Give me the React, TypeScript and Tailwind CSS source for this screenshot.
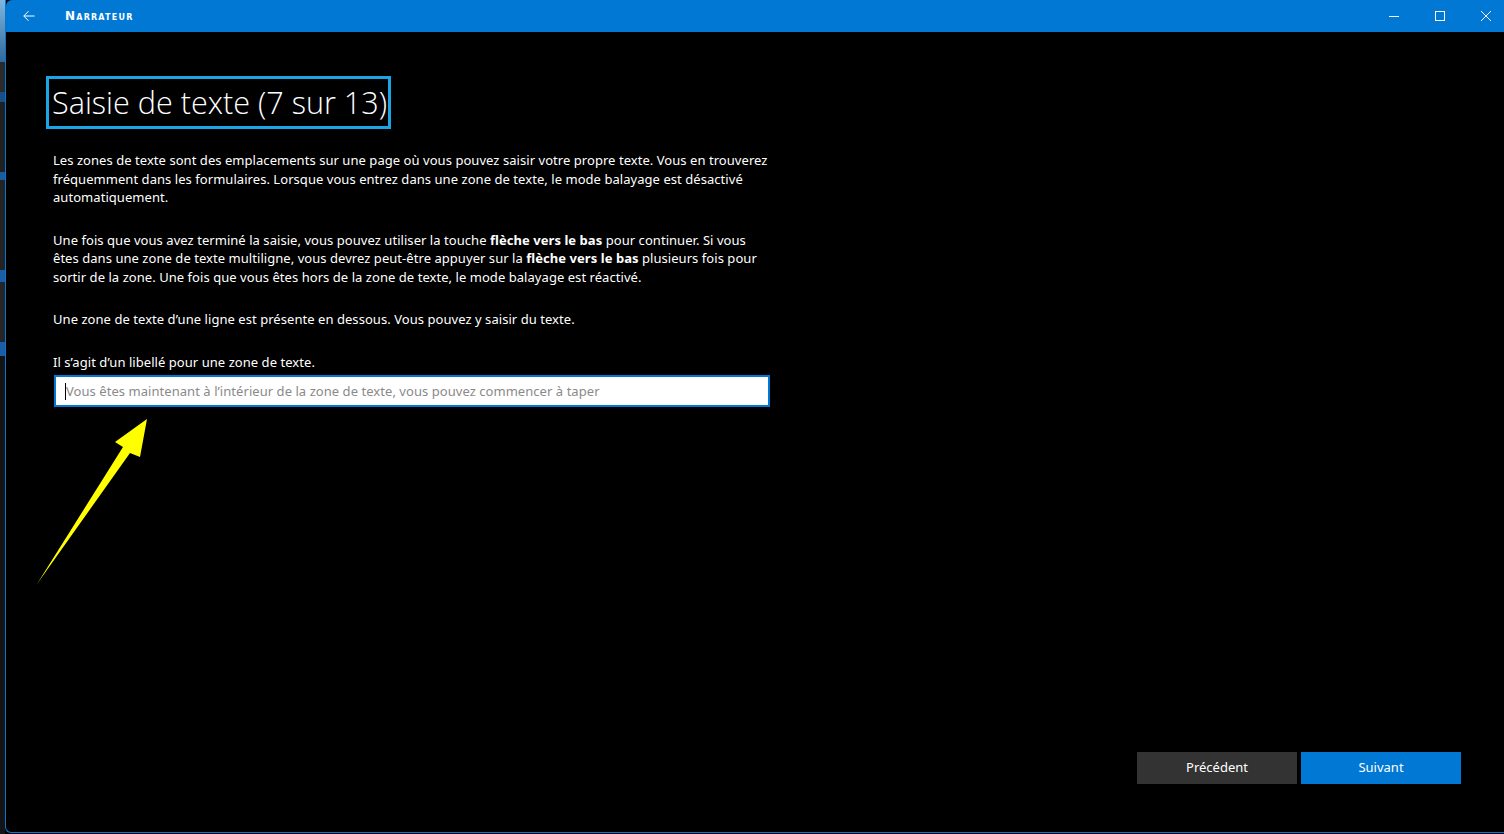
import React from 'react';

const body = { fontFamily: '"Noto Sans", "Open Sans", Arial, sans-serif' };

const App: React.FC = () => {
    return (
        <div className="relative flex w-[1504px] h-[834px] bg-black overflow-hidden" style={body}>
            {/* desktop strip peeking on the left */}
            <div className="w-[5px] h-full flex flex-col bg-[#1c1c1c]">
                <div className="h-[62px] bg-gradient-to-b from-[#7fb6e0] to-[#2f6a9a]" />
                <div className="h-[30px] bg-[#2a2a2a]" />
                <div className="h-[10px] bg-[#1a4f86]" />
                <div className="h-[70px] bg-[#202020]" />
                <div className="h-[8px] bg-[#1d5c9c]" />
                <div className="h-[90px] bg-[#232323]" />
                <div className="h-[12px] bg-[#1a5ea6]" />
                <div className="h-[60px] bg-[#262626]" />
                <div className="h-[14px] bg-[#1a5ea6]" />
                <div className="flex-1 bg-[#141414]" />
            </div>

            {/* window */}
            <div className="flex-1 flex flex-col border-l border-b border-[#0a74d0] rounded-bl-[6px] mb-[1px]">
                <div className="h-8 bg-[#0078d4] flex items-center text-white rounded-tl-[6px]">
                    <div className="w-[46px] flex items-center justify-center">
                        <svg width="12" height="12" viewBox="0 0 12 12" fill="none" stroke="white" strokeWidth="1">
                            <path d="M11.5 6H0.8M5.5 1.2L0.8 6l4.7 4.8" />
                        </svg>
                    </div>
                    <span
                        className="ml-[13px] text-[12px] font-bold tracking-[1.2px] [font-variant:small-caps]"
                        style={{ fontFamily: '"DejaVu Sans", sans-serif' }}
                    >
                        Narrateur
                    </span>
                    <div className="ml-auto mr-[-5px] flex h-full">
                        <div className="w-[46px] flex items-center justify-center">
                            <svg width="10" height="10" viewBox="0 0 10 10" stroke="white" strokeWidth="1">
                                <path d="M0 5.5h10" />
                            </svg>
                        </div>
                        <div className="w-[46px] flex items-center justify-center">
                            <svg width="10" height="10" viewBox="0 0 10 10" fill="none" stroke="white" strokeWidth="1">
                                <rect x="0.5" y="0.5" width="9" height="9" />
                            </svg>
                        </div>
                        <div className="w-[46px] flex items-center justify-center">
                            <svg width="10" height="10" viewBox="0 0 10 10" stroke="white" strokeWidth="1">
                                <path d="M0 0l10 10M10 0L0 10" />
                            </svg>
                        </div>
                    </div>
                </div>

                <div className="flex-1 flex flex-col pl-[40px] pr-[43px] pt-[44px] pb-[48px] text-white">
                    <div className="self-start border-[3px] border-[#1aa6e6] pl-[3px] pr-[1px] h-[53px] flex items-center">
                        <h1 className="text-[30.6px] font-light leading-none" style={{ fontFamily: '"Open Sans", sans-serif' }}>
                            Saisie de texte (7 sur 13)
                        </h1>
                    </div>

                    <div className="ml-[7px] w-[716px] text-[13px] leading-[18.5px] tracking-[0.05px] whitespace-nowrap mt-[22px] flex flex-col gap-[24px]">
                        <p>
                            Les zones de texte sont des emplacements sur une page où vous pouvez saisir votre propre texte. Vous en trouverez
                            <br />
                            fréquemment dans les formulaires. Lorsque vous entrez dans une zone de texte, le mode balayage est désactivé
                            <br />
                            automatiquement.
                        </p>
                        <p>
                            Une fois que vous avez terminé la saisie, vous pouvez utiliser la touche <b>flèche vers le bas</b> pour continuer. Si vous
                            <br />
                            êtes dans une zone de texte multiligne, vous devrez peut-être appuyer sur la <b>flèche vers le bas</b> plusieurs fois pour
                            <br />
                            sortir de la zone. Une fois que vous êtes hors de la zone de texte, le mode balayage est réactivé.
                        </p>
                        <p>Une zone de texte d’une ligne est présente en dessous. Vous pouvez y saisir du texte.</p>
                        <div>
                            <p>Il s’agit d’un libellé pour une zone de texte.</p>
                            <div className="mt-[4px] ml-[1px] w-[716px] h-[32px] bg-white border-2 border-[#0078d4] flex items-center pl-[9px]">
                                <span className="w-px h-[17px] bg-black" />
                                <span className="text-[13px] text-[#8a8a8a]">
                                    Vous êtes maintenant à l’intérieur de la zone de texte, vous pouvez commencer à taper
                                </span>
                            </div>
                        </div>
                    </div>

                    <div className="mt-auto self-end flex gap-[4px]">
                        <button className="w-[160px] h-[32px] bg-[#333333] text-white text-[13px]">Précédent</button>
                        <button className="w-[160px] h-[32px] bg-[#0078d4] text-white text-[13px]">Suivant</button>
                    </div>
                </div>
            </div>

            {/* yellow annotation arrow */}
            <svg className="absolute left-0 top-0 pointer-events-none" width="200" height="600" viewBox="0 0 200 600">
                <polygon points="37,584 123,447 115,442 147,419 140,457 130,453" fill="#ffff00" />
            </svg>
        </div>
    );
};

export default App;
